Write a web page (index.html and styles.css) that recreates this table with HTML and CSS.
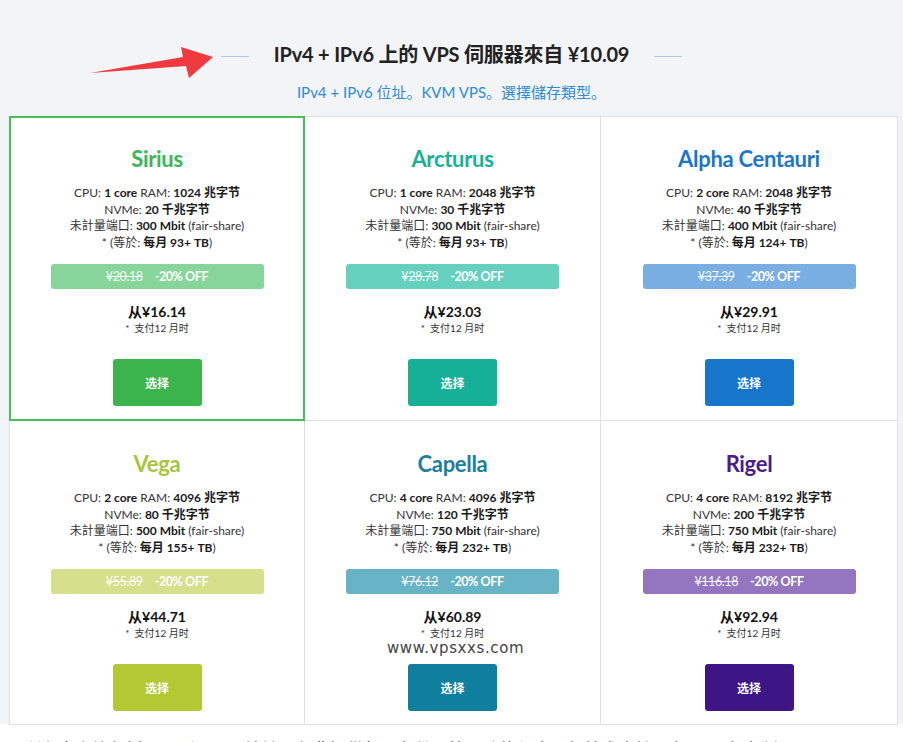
FILE: index.html
```html
<!DOCTYPE html>
<html lang="zh">
<head>
<meta charset="utf-8">
<title>VPS</title>
<link rel="stylesheet" href="styles.css">
</head>
<body>
<div class="page">
  <svg class="arrow" width="140" height="50" viewBox="80 35 140 50">
    <polygon points="90,73 183,57 181,47 213,57 189,78 186,66" fill="#ef3b3f"/>
  </svg>
  <header class="head">
    <div class="title-row">
      <span class="dash"></span>
      <h1 class="title">IPv4 + IPv6 上的 VPS 伺服器來自 ¥10.09</h1>
      <span class="dash"></span>
    </div>
    <p class="subtitle">IPv4 + IPv6 位址。KVM VPS。選擇儲存類型。</p>
  </header>
  <main class="grid">
    <div class="card selected">
      <h2 class="name c-sirius">Sirius</h2>
      <div class="specs">
        <div>CPU: <b>1 core</b> RAM: <b>1024 兆字节</b></div>
        <div>NVMe: <b>20 千兆字节</b></div>
        <div>未計量端口: <b>300 Mbit</b> (fair-share)</div>
        <div>* (等於: <b>每月 93+ TB</b>)</div>
      </div>
      <div class="deal b-sirius"><s>¥20.18</s><b>-20% OFF</b></div>
      <div class="price">从¥16.14</div>
      <div class="term">*&nbsp; 支付12 月时</div>
      <button class="pick k-sirius">选择</button>
    </div>
    <div class="card">
      <h2 class="name c-arcturus">Arcturus</h2>
      <div class="specs">
        <div>CPU: <b>1 core</b> RAM: <b>2048 兆字节</b></div>
        <div>NVMe: <b>30 千兆字节</b></div>
        <div>未計量端口: <b>300 Mbit</b> (fair-share)</div>
        <div>* (等於: <b>每月 93+ TB</b>)</div>
      </div>
      <div class="deal b-arcturus"><s>¥28.78</s><b>-20% OFF</b></div>
      <div class="price">从¥23.03</div>
      <div class="term">*&nbsp; 支付12 月时</div>
      <button class="pick k-arcturus">选择</button>
    </div>
    <div class="card">
      <h2 class="name c-alpha">Alpha Centauri</h2>
      <div class="specs">
        <div>CPU: <b>2 core</b> RAM: <b>2048 兆字节</b></div>
        <div>NVMe: <b>40 千兆字节</b></div>
        <div>未計量端口: <b>400 Mbit</b> (fair-share)</div>
        <div>* (等於: <b>每月 124+ TB</b>)</div>
      </div>
      <div class="deal b-alpha"><s>¥37.39</s><b>-20% OFF</b></div>
      <div class="price">从¥29.91</div>
      <div class="term">*&nbsp; 支付12 月时</div>
      <button class="pick k-alpha">选择</button>
    </div>
    <div class="card">
      <h2 class="name c-vega">Vega</h2>
      <div class="specs">
        <div>CPU: <b>2 core</b> RAM: <b>4096 兆字节</b></div>
        <div>NVMe: <b>80 千兆字节</b></div>
        <div>未計量端口: <b>500 Mbit</b> (fair-share)</div>
        <div>* (等於: <b>每月 155+ TB</b>)</div>
      </div>
      <div class="deal b-vega"><s>¥55.89</s><b>-20% OFF</b></div>
      <div class="price">从¥44.71</div>
      <div class="term">*&nbsp; 支付12 月时</div>
      <button class="pick k-vega">选择</button>
    </div>
    <div class="card">
      <h2 class="name c-capella">Capella</h2>
      <div class="specs">
        <div>CPU: <b>4 core</b> RAM: <b>4096 兆字节</b></div>
        <div>NVMe: <b>120 千兆字节</b></div>
        <div>未計量端口: <b>750 Mbit</b> (fair-share)</div>
        <div>* (等於: <b>每月 232+ TB</b>)</div>
      </div>
      <div class="deal b-capella"><s>¥76.12</s><b>-20% OFF</b></div>
      <div class="price">从¥60.89</div>
      <div class="term">*&nbsp; 支付12 月时</div>
      <div class="watermark">www.vpsxxs.com</div>
      <button class="pick k-capella">选择</button>
    </div>
    <div class="card">
      <h2 class="name c-rigel">Rigel</h2>
      <div class="specs">
        <div>CPU: <b>4 core</b> RAM: <b>8192 兆字节</b></div>
        <div>NVMe: <b>200 千兆字节</b></div>
        <div>未計量端口: <b>750 Mbit</b> (fair-share)</div>
        <div>* (等於: <b>每月 232+ TB</b>)</div>
      </div>
      <div class="deal b-rigel"><s>¥116.18</s><b>-20% OFF</b></div>
      <div class="price">从¥92.94</div>
      <div class="term">*&nbsp; 支付12 月时</div>
      <button class="pick k-rigel">选择</button>
    </div>
  </main>
  <p class="footnote">所有方案均包括 IPv4 和 IPv6 地址，免费提供每周备份、快照功能与全天候技术支持服务，可随时升级</p>
</div>
</body>
</html>
```

FILE: styles.css
```css
* { box-sizing: border-box; }
html, body { margin: 0; padding: 0; background: #ffffff; }
body {
  font-family: Lato, "Noto Sans CJK SC", sans-serif;
  color: #222;
  overflow: hidden;
}
.page {
  position: relative;
  width: 903px;
}
.arrow {
  position: absolute;
  left: 80px;
  top: 35px;
}
.head {
  background: #f3f4f6;
  padding: 40px 0 14px;
  text-align: center;
}
.title-row {
  display: flex;
  justify-content: center;
  align-items: center;
  gap: 25px;
}
.dash {
  width: 28px;
  height: 1px;
  background: #a9cbe9;
  margin-top: 4px;
}
.title {
  margin: 0;
  font-size: 20px;
  font-weight: 700;
  line-height: 28px;
  color: #222;
  letter-spacing: -0.2px;
}
.subtitle {
  margin: 14px 0 0;
  font-size: 15px;
  line-height: 20px;
  color: #2e8bd4;
}
.grid {
  display: grid;
  grid-template-columns: 295px 296px 297px;
  background: #f3f4f6;
  padding: 0 6px 0 9px;
}
.card {
  position: relative;
  background: #fff;
  border: 1px solid #e0e0e0;
  margin: 0 -1px -1px 0;
  height: 305px;
  display: flex;
  flex-direction: column;
  align-items: center;
  padding-top: 27px;
}
.card.selected {
  border: 2px solid #45bf5e;
  z-index: 1;
  padding-top: 26px;
}
.grid .card:nth-child(n+4) { padding-top: 28px; }
.name {
  margin: 0;
  font-size: 22px;
  font-weight: 700;
  line-height: 30px;
  letter-spacing: -0.3px;
}
.c-sirius { color: #3db55a; }
.c-arcturus { color: #17b295; }
.c-alpha { color: #1b77c9; }
.c-vega { color: #a9c53d; }
.c-capella { color: #1b7f9c; }
.c-rigel { color: #4a1d8a; }
.specs {
  margin-top: 11px;
  font-size: 12px;
  line-height: 16.6px;
  text-align: center;
  color: #333;
}
.specs b { color: #1a1a1a; }
.deal {
  margin-top: 13px;
  width: 213px;
  height: 25px;
  border-radius: 3px;
  display: flex;
  justify-content: center;
  align-items: center;
  gap: 12px;
  color: #fff;
  font-size: 12.5px;
  letter-spacing: -0.4px;
}
.deal s { opacity: 0.9; }
.b-sirius { background: #87d59a; }
.b-arcturus { background: #66d0bf; }
.b-alpha { background: #78aee2; }
.b-vega { background: #d5df8c; }
.b-capella { background: #68b3c5; }
.b-rigel { background: #9375c0; }
.price {
  margin-top: 14px;
  font-size: 14px;
  font-weight: 700;
  line-height: 18px;
  color: #111;
}
.term {
  font-size: 10px;
  line-height: 14px;
  color: #333;
}
.pick {
  margin-top: 24px;
  width: 89px;
  height: 47px;
  border: 0;
  border-radius: 3px;
  color: #fff;
  font-family: Lato, "Noto Sans CJK SC", sans-serif;
  font-size: 12px;
  font-weight: 700;
}
.k-sirius { background: #3bb54b; }
.k-arcturus { background: #15b097; }
.k-alpha { background: #1776ca; }
.k-vega { background: #b3c933; }
.k-capella { background: #0e7f9c; }
.k-rigel { background: #3d1584; }
.watermark {
  position: absolute;
  left: 82px;
  top: 218px;
  font-family: "DejaVu Sans", sans-serif;
  font-size: 15px;
  color: #444;
  letter-spacing: 0.6px;
}
.footnote {
  margin: 16px 0 0 24px;
  font-size: 17px;
  line-height: 20px;
  color: #333;
  white-space: nowrap;
}
```
